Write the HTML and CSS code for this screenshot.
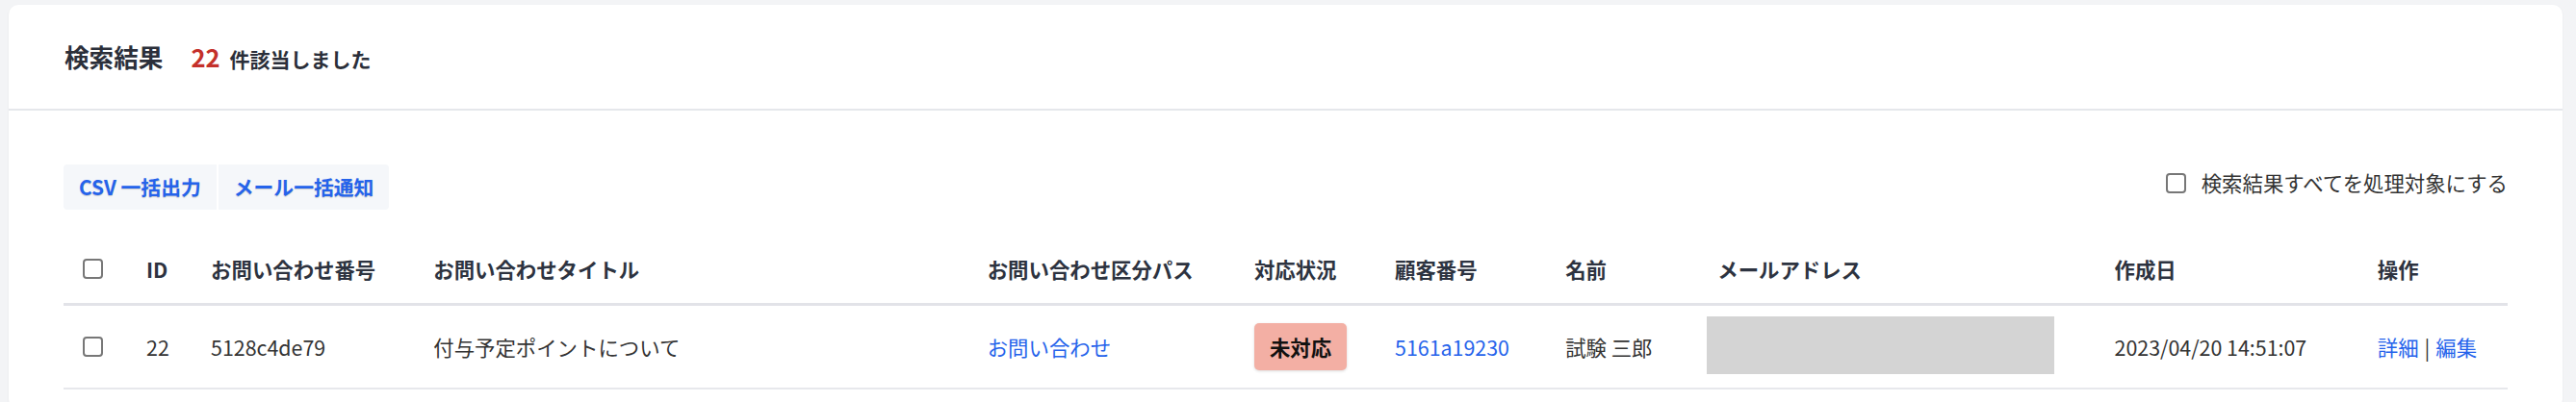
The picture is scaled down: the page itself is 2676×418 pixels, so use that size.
FILE: index.html
```html
<!DOCTYPE html>
<html lang="ja">
<head>
<meta charset="utf-8">
<title>検索結果</title>
<link rel="stylesheet" href="styles.css">
</head>
<body>
<div class="card">
  <div class="card-header">
    <h2 class="title">検索結果</h2>
    <p class="count"><span class="num">22</span>件該当しました</p>
  </div>
  <div class="card-body">
    <div class="toolbar">
      <div class="btn-group">
        <button class="btn" type="button">CSV 一括出力</button>
        <button class="btn" type="button">メール一括通知</button>
      </div>
      <label class="select-all"><input type="checkbox" class="check"><span>検索結果すべてを処理対象にする</span></label>
    </div>
    <table class="results">
      <colgroup>
        <col class="c-check">
        <col class="c-id">
        <col class="c-no">
        <col class="c-title">
        <col class="c-path">
        <col class="c-status">
        <col class="c-cust">
        <col class="c-name">
        <col class="c-mail">
        <col class="c-date">
        <col class="c-op">
      </colgroup>
      <thead>
        <tr>
          <th><input type="checkbox" class="check"></th>
          <th>ID</th>
          <th>お問い合わせ番号</th>
          <th>お問い合わせタイトル</th>
          <th>お問い合わせ区分パス</th>
          <th>対応状況</th>
          <th>顧客番号</th>
          <th>名前</th>
          <th>メールアドレス</th>
          <th>作成日</th>
          <th>操作</th>
        </tr>
      </thead>
      <tbody>
        <tr>
          <td><input type="checkbox" class="check"></td>
          <td>22</td>
          <td>5128c4de79</td>
          <td>付与予定ポイントについて</td>
          <td><a class="link" href="#">お問い合わせ</a></td>
          <td><span class="badge">未対応</span></td>
          <td><a class="link" href="#">5161a19230</a></td>
          <td>試験 三郎</td>
          <td><span class="mask"></span></td>
          <td>2023/04/20 14:51:07</td>
          <td><a class="link" href="#">詳細</a><span class="sep">|</span><a class="link" href="#">編集</a></td>
        </tr>
      </tbody>
    </table>
  </div>
</div>
</body>
</html>
```

FILE: styles.css
```css
html, body {
  margin: 0;
  padding: 0;
  background: #f3f4f6;
}

body {
  font-family: "Noto Sans CJK JP", "Noto Sans", sans-serif;
  color: #333;
  font-size: 21.4px;
}

.card {
  margin: 5px 14px 0 9px;
  background: #fff;
  border-radius: 10px;
  box-shadow: 0 1px 3px rgba(0, 0, 0, 0.05);
  min-height: 420px;
}

.card-header {
  padding: 0 57px 0 58px;
  display: flex;
  align-items: center;
  border-bottom: 2px solid #e5e7eb;
  box-sizing: border-box;
  height: 110px;
}

.title {
  margin: 0;
  font-size: 25.6px;
  font-weight: 700;
  color: #2b2f3a;
  line-height: 1.4;
}

.count {
  margin: 0 0 0 29px;
  font-size: 21px;
  font-weight: 700;
  color: #2b2f3a;
  display: flex;
  align-items: baseline;
  line-height: 1.4;
}

.num {
  color: #c4302b;
  font-size: 25.6px;
  margin-right: 10px;
}

.card-body {
  padding: 56px 57px 0 57px;
}

.toolbar {
  display: flex;
  justify-content: space-between;
  align-items: center;
}

.btn-group {
  display: flex;
  gap: 2px;
}

.btn {
  font-family: inherit;
  font-size: 20.8px;
  font-weight: 700;
  color: #2563eb;
  background: #f5f7fa;
  border: none;
  height: 47px;
  padding: 0 16px;
  line-height: 47px;
  text-shadow: 0 1px 1px rgba(0, 0, 0, 0.18);
  cursor: pointer;
}

.btn:first-child {
  border-radius: 4px 0 0 4px;
}

.btn:last-child {
  border-radius: 0 4px 4px 0;
}

.select-all {
  display: flex;
  align-items: center;
  gap: 16px;
  margin-bottom: 9px;
  line-height: 1.4;
  color: #333;
}

.check {
  appearance: none;
  -webkit-appearance: none;
  width: 21px;
  height: 21px;
  margin: 0;
  border: 2px solid #777;
  border-radius: 4px;
  background: #fff;
  box-sizing: border-box;
  vertical-align: middle;
  display: block;
}

.results {
  margin-top: 26px;
  width: 100%;
  table-layout: fixed;
  border-collapse: collapse;
}

.c-check { width: 66px; }
.c-id { width: 67px; }
.c-no { width: 231px; }
.c-title { width: 575px; }
.c-path { width: 277px; }
.c-status { width: 146px; }
.c-cust { width: 177px; }
.c-name { width: 158px; }
.c-mail { width: 412px; }
.c-date { width: 273px; }
.c-op { width: 155px; }

.results th,
.results td {
  padding: 0 20px;
  text-align: left;
  vertical-align: middle;
  white-space: nowrap;
  line-height: 1.4;
}

.results th {
  height: 71px;
  font-weight: 700;
  color: #2d3340;
  border-bottom: 3px solid #e2e3e8;
}

.results td {
  height: 85px;
  color: #333;
  border-bottom: 2px solid #e7e8ec;
}

.link {
  color: #2563eb;
  text-decoration: none;
}

.badge {
  display: inline-block;
  height: 49px;
  line-height: 49px;
  padding: 0 16px;
  background: #f3afa4;
  color: #111;
  font-weight: 700;
  border-radius: 5px;
  box-shadow: 0 1px 3px rgba(0, 0, 0, 0.15);
  vertical-align: middle;
}

.mask {
  display: block;
  width: 361px;
  height: 60px;
  margin-left: -11px;
  margin-top: -3px;
  background: #d4d4d4;
}

.sep {
  margin: 0 6px;
  color: #333;
}
```
